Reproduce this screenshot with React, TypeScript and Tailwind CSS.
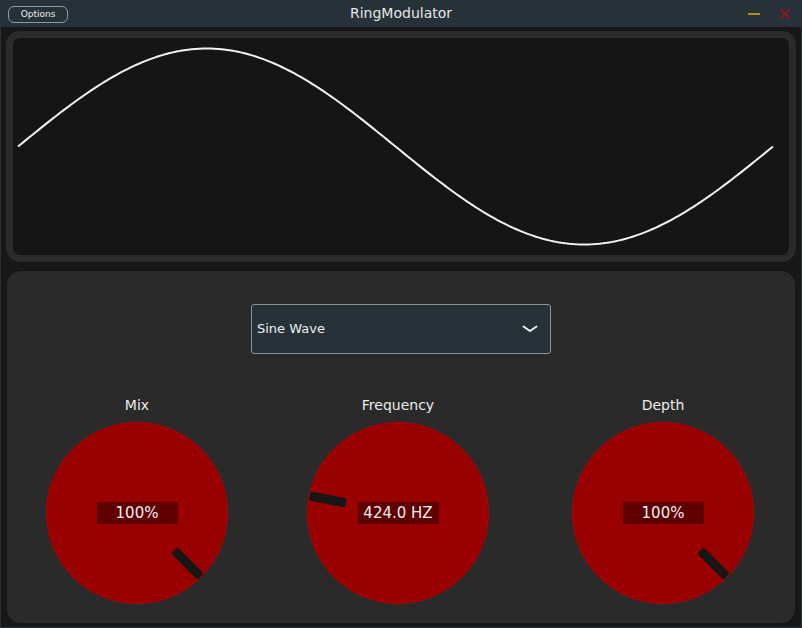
import React from "react";

const FONT = { fontFamily: '"DejaVu Sans", "Liberation Sans", sans-serif' };

function Wave() {
  const w = 776;
  const h = 217;
  const x0 = 5;
  const x1 = 760;
  const cy = 108.5;
  const amp = 98;
  const pts: string[] = [];
  for (let i = 0; i <= 200; i++) {
    const t = i / 200;
    const x = x0 + (x1 - x0) * t;
    const y = cy - amp * Math.sin(t * Math.PI * 2);
    pts.push(`${x.toFixed(2)},${y.toFixed(2)}`);
  }
  return (
    <svg width={w} height={h} viewBox={`0 0 ${w} ${h}`} className="block">
      <polyline points={pts.join(" ")} fill="none" stroke="#f2f2f2" strokeWidth={2} strokeLinejoin="round" />
    </svg>
  );
}

function Knob({ label, value, angle }: { label: string; value: string; angle: number }) {
  return (
    <div className="flex flex-col items-center">
      <div className="text-[14px] leading-[17px] text-[#ececec]" style={FONT}>
        {label}
      </div>
      <div className="relative mt-[8px] w-[182px] h-[182px]">
        <svg width={182} height={182} viewBox="0 0 182 182" className="block">
          <circle cx={91} cy={91} r={90.5} fill="#990000" stroke="#b20000" strokeWidth={1} />
          <rect x={86.5} y={1} width={9} height={37} rx={2} fill="#161616" transform={`rotate(${angle} 91 91)`} />
        </svg>
        <div className="absolute inset-0 flex items-center justify-center">
          <div
            className="w-[81px] h-[22px] bg-[#5e0000] flex items-center justify-center text-[15px] text-[#f0f0f0]"
            style={FONT}
          >
            {value}
          </div>
        </div>
      </div>
    </div>
  );
}

export default function App() {
  return (
    <div className="w-[802px] h-[628px] flex flex-col bg-[#171717] border-x border-b border-[#263238]" style={FONT}>
      <div className="h-[27px] shrink-0 bg-[#263238] relative flex items-center justify-center -mx-px">
        <div className="absolute left-[8px] top-[6px] w-[60px] h-[17px] rounded-[6px] border border-[#8d9a9f] flex items-center justify-center text-[9px] text-[#eeeeee]">
          Options
        </div>
        <div className="text-[14px] text-[#e6e6e6]">RingModulator</div>
        <div className="absolute right-[42px] top-[13px] w-[12px] h-[2px] bg-[#a8901c]" />
        <svg className="absolute right-[11px] top-[8px]" width={12} height={12} viewBox="0 0 12 12">
          <path d="M1 1 L11 11 M11 1 L1 11" stroke="#a3101e" strokeWidth={1.6} />
        </svg>
      </div>
      <div className="flex-1 flex flex-col px-[5px] pt-[4px] pb-[4px]">
        <div className="h-[231px] shrink-0 rounded-[14px] border-[7px] border-[#2b2b2b] bg-[#151515] overflow-hidden">
          <Wave />
        </div>
        <div className="flex-1 mt-[9px] mx-px rounded-[14px] bg-[#2a2a2a] flex flex-col items-center pt-[33px]">
          <div className="w-[300px] h-[50px] rounded-[3px] border border-[#8a9599] bg-[#263238] flex items-center justify-between pl-[5px] pr-[12px]">
            <span className="text-[13px] text-[#eeeeee]">Sine Wave</span>
            <svg width={16} height={8} viewBox="0 0 16 8">
              <path d="M1.5 1.5 L8 6 L14.5 1.5" fill="none" stroke="#f0f0f0" strokeWidth={2} strokeLinecap="round" strokeLinejoin="round" />
            </svg>
          </div>
          <div className="w-full grid grid-cols-[260px_262px_268px] mt-[43px]">
            <Knob label="Mix" value="100%" angle={135} />
            <Knob label="Frequency" value="424.0 HZ" angle={-79} />
            <Knob label="Depth" value="100%" angle={135} />
          </div>
        </div>
      </div>
    </div>
  );
}
